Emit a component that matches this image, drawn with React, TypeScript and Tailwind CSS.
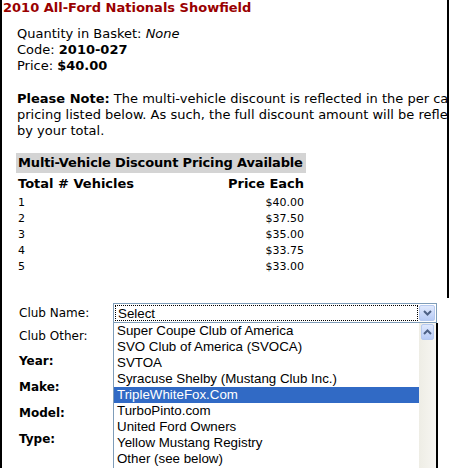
const pricing = [
  { qty: 1, price: '$40.00' },
  { qty: 2, price: '$37.50' },
  { qty: 3, price: '$35.00' },
  { qty: 4, price: '$33.75' },
  { qty: 5, price: '$33.00' },
];

const clubs = [
  'Super Coupe Club of America',
  'SVO Club of America (SVOCA)',
  'SVTOA',
  'Syracuse Shelby (Mustang Club Inc.)',
  'TripleWhiteFox.Com',
  'TurboPinto.com',
  'United Ford Owners',
  'Yellow Mustang Registry',
  'Other (see below)',
];

const selected = 'TripleWhiteFox.Com';

function Chevron({ up = false }: { up?: boolean }) {
  return (
    <svg width="9" height="6" viewBox="0 0 9 6">
      <path
        d={up ? 'M1 5 L4.5 1.5 L8 5' : 'M1 1 L4.5 4.5 L8 1'}
        fill="none"
        stroke="#4d6185"
        strokeWidth="2"
      />
    </svg>
  );
}

function ClubSelect() {
  return (
    <div className="relative w-[324px] h-[20px] font-['Liberation_Sans',Arial,sans-serif] text-[13.333px]">
      {/* closed box */}
      <div className="flex h-full p-px border border-[#7f9db9] bg-white">
        <div className="flex-1 border border-dotted border-black pl-[2px] leading-[16px]">Select</div>
        <div className="ml-px w-[16px] flex items-center justify-center rounded-[2px] border border-[#b6c9ef] bg-gradient-to-b from-[#e0e9fd] to-[#b7cbf6]">
          <Chevron />
        </div>
      </div>

      {/* open list */}
      <div className="absolute left-0 top-full w-[325px] h-[160px] flex bg-white border-l border-[#7f9db9] border-r-2 border-r-black">
        <ul className="flex-1">
          {clubs.map((c) => (
            <li
              key={c}
              className={
                c === selected
                  ? 'h-[16px] leading-[16px] pl-[3px] whitespace-nowrap bg-[#316ac5] text-white'
                  : 'h-[16px] leading-[16px] pl-[3px] whitespace-nowrap'
              }
            >
              {c}
            </li>
          ))}
        </ul>
        <div className="w-[17px] bg-gradient-to-r from-[#eeede5] to-[#f7f6f2] pt-px px-[2px]">
          <div className="h-[16px] flex items-center justify-center rounded-[2px] border border-[#b6c9ef] bg-gradient-to-b from-[#e0e9fd] to-[#b7cbf6]">
            <Chevron up />
          </div>
        </div>
      </div>
    </div>
  );
}

export default function App() {
  return (
    <div className="w-[452px] h-[468px] overflow-hidden bg-white text-black font-['DejaVu_Sans',Verdana,sans-serif]">
      <div className="w-[449px] h-[468px] border-l-2 border-black">
        {/* Product info */}
        <div className="h-[298px] overflow-hidden border-r-2 border-black">
          <h1 className="pl-px text-[13px] leading-[16px] font-bold text-[#990000] whitespace-nowrap">
            2010 All-Ford Nationals Showfield
          </h1>

          <div className="mt-[10px] pl-[15px] text-[13px] leading-[16px]">
            <p>
              Quantity in Basket: <i>None</i>
            </p>
            <p>
              Code: <b>2010-027</b>
            </p>
            <p>
              Price: <b>$40.00</b>
            </p>

            <div className="mt-[17px] whitespace-nowrap">
              <p>
                <b>Please Note:</b> The multi-vehicle discount is reflected in the per car
              </p>
              <p>pricing listed below. As such, the full discount amount will be reflected</p>
              <p>by your total.</p>
            </div>
          </div>

          {/* Discount table */}
          <div className="mt-[14px] ml-[14px] w-[290px]">
            <div className="h-[20px] bg-[#d4d4d4] px-[2px] text-[13px] leading-[20px] font-bold tracking-[-0.15px] whitespace-nowrap">
              Multi-Vehicle Discount Pricing Available
            </div>
            <div className="h-[22px] flex items-center justify-between px-[2px] text-[13px] font-bold">
              <span>Total # Vehicles</span>
              <span>Price Each</span>
            </div>
            {pricing.map((row) => (
              <div key={row.qty} className="h-[16px] flex items-center justify-between px-[2px] text-[11px]">
                <span>{row.qty}</span>
                <span>{row.price}</span>
              </div>
            ))}
          </div>
        </div>

        {/* Order form */}
        <div className="pt-[5px] pl-[17px] text-[12px]">
          <div className="flex items-center h-[20px]">
            <span className="w-[94px]">Club Name:</span>
            <ClubSelect />
          </div>
          <div className="flex items-center h-[25px]">Club Other:</div>
          <div className="flex items-center h-[26px] font-bold">Year:</div>
          <div className="flex items-center h-[26px] font-bold">Make:</div>
          <div className="flex items-center h-[26px] font-bold">Model:</div>
          <div className="flex items-center h-[26px] font-bold">Type:</div>
        </div>
      </div>
    </div>
  );
}
